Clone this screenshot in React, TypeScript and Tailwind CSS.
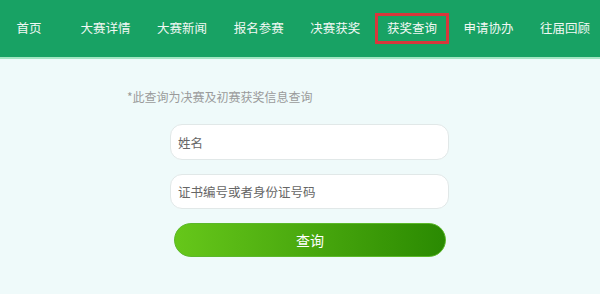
import { useState } from "react";

const navItems = ["首页", "大赛详情", "大赛新闻", "报名参赛", "决赛获奖", "获奖查询", "申请协办", "往届回顾"];

export default function App() {
  const [name, setName] = useState("");
  const [certNo, setCertNo] = useState("");
  const active = "获奖查询";

  return (
    <div
      className="min-h-[294px] bg-[#effafa]"
      style={{ fontFamily: '"Noto Sans CJK SC", "Noto Sans", sans-serif' }}
    >
      {/* top nav */}
      <nav className="flex h-[59px] items-center justify-center overflow-hidden border-b-2 border-[#a3e6c3] bg-[#18a264] pr-[6px]">
        {navItems.map((item) => (
          <div key={item} className="flex w-[76.6px] shrink-0 justify-center">
            <a
              href="#"
              className={
                item === active
                  ? "flex h-[31px] items-center border-[3px] border-[#d9363b] px-[9px] text-[12.5px] text-[#f1f8f4]"
                  : "flex h-[31px] items-center px-[9px] text-[12.5px] text-[#f1f8f4]"
              }
            >
              {item}
            </a>
          </div>
        ))}
      </nav>

      {/* query form */}
      <div className="pt-[29px]">
        <p className="pl-[127px] text-[12px] leading-[18px] text-[#9a9a9a]">*此查询为决赛及初赛获奖信息查询</p>

        <form className="mt-[18px] flex w-[449px] flex-col pl-[170px]" onSubmit={(e) => e.preventDefault()}>
          <input
            value={name}
            onChange={(e) => setName(e.target.value)}
            placeholder="姓名"
            className="h-[36px] w-full rounded-[12px] border border-[#e1e8e8] bg-white px-[7px] text-[12.5px] text-[#333] outline-none placeholder:text-[#666]"
          />
          <input
            value={certNo}
            onChange={(e) => setCertNo(e.target.value)}
            placeholder="证书编号或者身份证号码"
            className="mt-[14px] h-[35px] w-full rounded-[12px] border border-[#e1e8e8] bg-white px-[7px] text-[12.5px] text-[#333] outline-none placeholder:text-[#666]"
          />
          <button
            type="submit"
            className="mt-[14px] ml-[4px] h-[34px] w-[272px] rounded-full border border-[#5cb82a] bg-gradient-to-r from-[#66c71a] to-[#2a8a02] text-[14px] text-white"
          >
            查询
          </button>
        </form>
      </div>
    </div>
  );
}
